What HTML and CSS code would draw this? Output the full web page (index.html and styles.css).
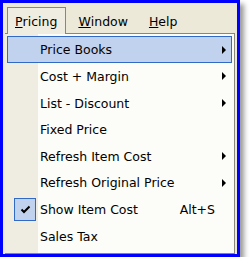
FILE: index.html
```html
<!DOCTYPE html>
<html lang="en">
<head>
  <meta charset="UTF-8">
  <title>Pricing Menu</title>
  <link rel="stylesheet" href="styles.css">
</head>
<body>
  <div class="frame">
    <div class="menubar">
      <div class="bar-item open"><u>P</u>ricing</div>
      <div class="bar-item"><u>W</u>indow</div>
      <div class="bar-item"><u>H</u>elp</div>
    </div>

    <div class="menu">
      <div class="row active">
        <span class="icon"></span>
        <span class="label">Price Books</span>
        <span class="arrow"></span>
      </div>
      <div class="row">
        <span class="icon"></span>
        <span class="label">Cost + Margin</span>
        <span class="arrow"></span>
      </div>
      <div class="row">
        <span class="icon"></span>
        <span class="label">List - Discount</span>
        <span class="arrow"></span>
      </div>
      <div class="row">
        <span class="icon"></span>
        <span class="label">Fixed Price</span>
      </div>
      <div class="row">
        <span class="icon"></span>
        <span class="label">Refresh Item Cost</span>
        <span class="arrow"></span>
      </div>
      <div class="row">
        <span class="icon"></span>
        <span class="label">Refresh Original Price</span>
        <span class="arrow"></span>
      </div>
      <div class="row">
        <span class="icon">
          <span class="check">
            <svg width="11" height="9" viewBox="0 0 11 9">
              <path d="M1.5 4.5 L4 7 L9.5 1.5" fill="none" stroke="#000" stroke-width="2"/>
            </svg>
          </span>
        </span>
        <span class="label">Show Item Cost</span>
        <span class="shortcut">Alt+S</span>
      </div>
      <div class="row">
        <span class="icon"></span>
        <span class="label">Sales Tax</span>
      </div>
    </div>
  </div>
</body>
</html>
```

FILE: styles.css
```css
body {
  margin: 0;
  background: #fff;
  font-family: "DejaVu Sans", sans-serif;
  font-size: 12.5px;
  color: #000;
}

.frame {
  box-sizing: border-box;
  width: 240px;
  height: 257px;
  border: 3px solid #0000ff;
  background: #ece9d8;
  box-shadow: 4px 4px 5px rgba(0, 0, 0, 0.4);
  display: flex;
  flex-direction: column;
}

.menubar {
  height: 30px;
  display: flex;
  align-items: flex-end;
  gap: 4px;
  padding-left: 4px;
}

.bar-item {
  box-sizing: border-box;
  height: 26px;
  padding: 1px 8px 0 7px;
  border: 1px solid transparent;
  border-bottom: none;
  display: flex;
  align-items: center;
}

.bar-item.open {
  border-color: #8a867a;
  background: #efede2;
  position: relative;
  z-index: 1;
  height: 27px;
  margin-bottom: -1px;
}

.menu {
  box-sizing: border-box;
  flex: 1;
  margin: 0 2px 0 2px;
  padding: 2px;
  border: 1px solid #8a867a;
  border-left: none;
  background: linear-gradient(to right, #efede2 0 33px, #fcfcf9 33px);
}

.row {
  box-sizing: border-box;
  height: 26.625px;
  padding-top: 1px;
  display: flex;
  align-items: center;
  border: 1px solid transparent;
}

.row.active {
  border-color: #316ac5;
  background: #c1d2ee;
}

.icon {
  width: 32px;
  flex: none;
  display: flex;
  align-items: center;
}

.check {
  box-sizing: border-box;
  width: 22px;
  height: 23px;
  margin-left: 6px;
  border: 1px solid #316ac5;
  background: #c1d2ee;
  display: flex;
  align-items: center;
  justify-content: center;
}

.label {
  flex: 1;
}

.shortcut {
  margin-right: 16px;
}

.arrow {
  width: 0;
  height: 0;
  border-left: 4px solid #000;
  border-top: 4px solid transparent;
  border-bottom: 4px solid transparent;
  margin-right: 5px;
}
```
